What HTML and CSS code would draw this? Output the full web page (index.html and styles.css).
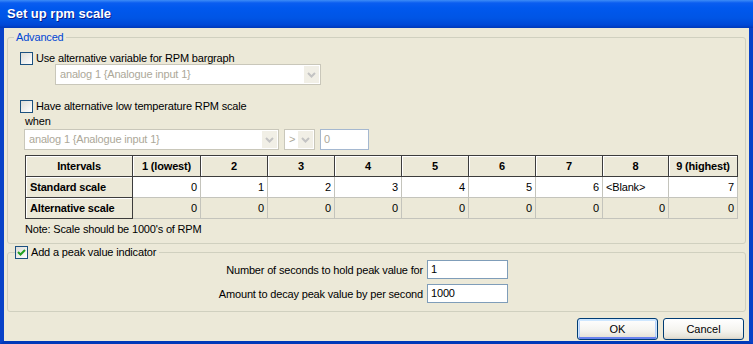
FILE: index.html
```html
<!DOCTYPE html>
<html>
<head>
<meta charset="utf-8">
<title>Set up rpm scale</title>
<link rel="stylesheet" href="styles.css">
</head>
<body>
<div class="window">
  <div class="titlebar">Set up rpm scale</div>
  <div class="frame">
    <div class="client">
      <fieldset class="group advanced">
        <legend>Advanced</legend>
        <label class="check"><span class="box"></span>Use alternative variable for RPM bargraph</label>
        <div class="combo disabled combo-var">
          <span class="val">analog 1 {Analogue input 1}</span>
          <span class="drop"><svg width="9" height="6" viewBox="0 0 9 6"><path d="M1 1l3.5 3.5L8 1" fill="none" stroke="#c3c3c3" stroke-width="2"/></svg></span>
        </div>
        <label class="check check-low"><span class="box"></span>Have alternative low temperature RPM scale</label>
        <div class="when">when</div>
        <div class="cond">
          <div class="combo disabled combo-when">
            <span class="val">analog 1 {Analogue input 1}</span>
            <span class="drop"><svg width="9" height="6" viewBox="0 0 9 6"><path d="M1 1l3.5 3.5L8 1" fill="none" stroke="#c3c3c3" stroke-width="2"/></svg></span>
          </div>
          <div class="combo disabled combo-op">
            <span class="val">&gt;</span>
            <span class="drop"><svg width="9" height="6" viewBox="0 0 9 6"><path d="M1 1l3.5 3.5L8 1" fill="none" stroke="#c3c3c3" stroke-width="2"/></svg></span>
          </div>
          <div class="edit disabled edit-limit">0</div>
        </div>
        <table class="grid">
          <colgroup>
            <col class="w107"><col class="w68"><col class="w67"><col class="w67"><col class="w67">
            <col class="w67"><col class="w67"><col class="w67"><col class="w66"><col class="w69">
          </colgroup>
          <tr>
            <th>Intervals</th><th>1 (lowest)</th><th>2</th><th>3</th><th>4</th>
            <th>5</th><th>6</th><th>7</th><th>8</th><th>9 (highest)</th>
          </tr>
          <tr class="std">
            <th class="rowhead">Standard scale</th>
            <td>0</td><td>1</td><td>2</td><td>3</td><td>4</td><td>5</td><td>6</td><td class="blank">&lt;Blank&gt;</td><td>7</td>
          </tr>
          <tr class="alt">
            <th class="rowhead">Alternative scale</th>
            <td>0</td><td>0</td><td>0</td><td>0</td><td>0</td><td>0</td><td>0</td><td>0</td><td>0</td>
          </tr>
        </table>
        <div class="note">Note: Scale should be 1000's of RPM</div>
      </fieldset>

      <fieldset class="group peak">
        <legend><label class="check"><span class="box checked"><svg width="11" height="11" viewBox="0 0 11 11"><path d="M2 5l2.5 2.5L9 3" fill="none" stroke="#21a121" stroke-width="2"/></svg></span>Add a peak value indicator</label></legend>
        <div class="fields">
          <span class="lbl">Number of seconds to hold peak value for</span>
          <div class="edit">1</div>
          <span class="lbl">Amount to decay peak value by per second</span>
          <div class="edit">1000</div>
        </div>
      </fieldset>

      <div class="buttons">
        <button class="btn default">OK</button>
        <button class="btn">Cancel</button>
      </div>
    </div>
  </div>
</div>
</body>
</html>
```

FILE: styles.css
```css
body {
  margin: 0;
  background: #ece9d8;
  font-family: "Liberation Sans", Arial, sans-serif;
  font-size: 11px;
  letter-spacing: -0.17px;
  color: #000;
}
.window {
  width: 753px;
  height: 344px;
  display: flex;
  flex-direction: column;
}
.titlebar {
  height: 28px;
  box-sizing: border-box;
  padding: 6px 0 0 7px;
  font-size: 13px;
  font-weight: bold;
  letter-spacing: 0;
  color: #fff;
  text-shadow: 1px 1px 0 #0a1e8c;
  background: linear-gradient(#3d8cf7 0, #0a5df0 3px, #0058ee 8px, #0055e5 18px, #0048d6 25px, #0038b8 28px);
}
.frame {
  flex: 1;
  display: flex;
  border-left: 4px solid #0842c8;
  border-right: 5px solid #0842c8;
  border-bottom: 3px solid #0038b8;
}
.client {
  flex: 1;
  background: #ece9d8;
  padding: 3px 3px 0 3px;
}
.group {
  margin: 0;
  border: 1px solid #d0d0bf;
  border-radius: 3px;
  padding: 0 7px 7px 12px;
}
.group legend {
  padding: 0 2px;
  margin-left: -6px;
  line-height: 13px;
}
.advanced legend {
  color: #0046d5;
}
.check {
  display: flex;
  align-items: center;
  height: 13px;
  line-height: 13px;
}
.box {
  width: 11px;
  height: 11px;
  border: 1px solid #1c5180;
  background: linear-gradient(135deg, #dcdcd7, #fff);
  margin-right: 3px;
  display: flex;
  align-items: center;
  justify-content: center;
}
.advanced > .check:first-of-type {
  margin-top: 8px;
}
.check-low {
  margin-top: 15px;
}
.combo {
  display: flex;
  height: 21px;
  box-sizing: border-box;
  border: 1px solid #c9c7ba;
  background: #fff;
}
.combo .val {
  flex: 1;
  padding: 3px 0 0 4px;
  line-height: 13px;
  color: #aca899;
}
.combo .drop {
  width: 15px;
  margin: 1px;
  background: #f1efe6;
  display: flex;
  align-items: center;
  justify-content: center;
}
.combo-var {
  width: 266px;
  margin: -1px 0 0 35px;
}
.when {
  margin: 2px 0 0 5px;
  line-height: 13px;
}
.cond {
  display: flex;
  gap: 5px;
  margin: 1px 0 0 4px;
}
.combo-when {
  width: 255px;
}
.combo-op {
  width: 31px;
}
.edit {
  height: 19px;
  box-sizing: border-box;
  border: 1px solid #7f9db9;
  background: #fff;
  padding: 2px 0 0 3px;
  line-height: 13px;
}
.edit.disabled {
  color: #aca899;
  border-color: #a5b8d0;
}
.edit-limit {
  width: 49px;
  height: 21px;
  padding-top: 3px;
}
.grid {
  margin: 5px 0 0 5px;
  width: 712px;
  table-layout: fixed;
  border-collapse: separate;
  border-spacing: 0;
  border-left: 1px solid #3c3c3c;
  border-top: 1px solid #3c3c3c;
}
.w107 { width: 107px; }
.w68 { width: 68px; }
.w67 { width: 67px; }
.w66 { width: 66px; }
.w69 { width: 69px; }
.grid th,
.grid td {
  box-sizing: border-box;
  height: 21px;
  padding: 0 3px;
  line-height: 13px;
  white-space: nowrap;
  overflow: hidden;
}
.grid th {
  background: #ece9d8;
  font-weight: bold;
  text-align: center;
  border-right: 1px solid #3c3c3c;
  border-bottom: 1px solid #3c3c3c;
  box-shadow: inset 1px 1px 0 #fff;
}
.grid th.rowhead {
  text-align: left;
  padding-left: 4px;
}
.grid td {
  text-align: right;
  border-right: 1px solid #c4c4bc;
  border-bottom: 1px solid #c4c4bc;
}
.grid .std td {
  background: #fff;
}
.grid .alt td {
  background: #ece9d8;
}
.grid td.blank {
  text-align: left;
}
.note {
  margin: 4px 0 0 5px;
  line-height: 13px;
}
.peak {
  margin-top: 2px;
  padding-bottom: 8px;
}
.peak legend {
  margin-left: -5px;
  padding: 0 3px 0 0;
}
.fields {
  display: grid;
  grid-template-columns: 403px 81px;
  column-gap: 4px;
  row-gap: 5px;
  align-items: center;
  margin-top: 1px;
}
.fields .lbl {
  text-align: right;
}
.buttons {
  display: flex;
  justify-content: flex-end;
  gap: 5px;
  margin: 6px 2px 0 0;
}
.btn {
  width: 81px;
  height: 22px;
  border: 1px solid #003c74;
  border-radius: 3px;
  background: linear-gradient(#fff, #f4f3ee 60%, #e6e3d8 90%, #d6d0c5);
  font-family: "Liberation Sans", Arial, sans-serif;
  font-size: 11px;
  color: #000;
  padding: 0;
}
.btn.default {
  box-shadow: inset 0 1px 0 1px #cee7ff, inset 0 -1px 0 1px #6982ee, inset 1px 0 0 1px #b9d1fa, inset -1px 0 0 1px #b9d1fa;
}
```
